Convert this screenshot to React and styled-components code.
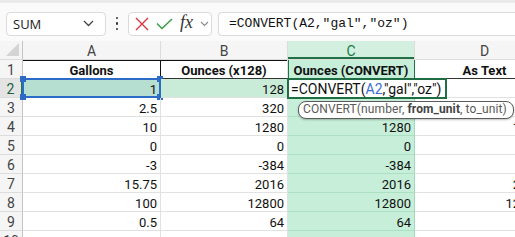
import styled, { createGlobalStyle, css } from "styled-components";

const GlobalStyle = createGlobalStyle`
  body {
    margin: 0;
    background: #ffffff;
    overflow: hidden;
    font-family: Roboto, "Liberation Sans", sans-serif;
  }
`;

// C3 sits under the function tooltip, so it is left blank here
const rows = [
  ["2.5", "320", "", "320"],
  ["10", "1280", "1280", "1280"],
  ["0", "0", "0", "0"],
  ["-3", "-384", "-384", "-384"],
  ["15.75", "2016", "2016", "2016"],
  ["100", "12800", "12800", "12800"],
  ["0.5", "64", "64", "64"],
  ["", "", "", ""],
];

export default function App() {
  return (
    <>
      <GlobalStyle />
      <Toolbar>
        <NameBox>
          <span>SUM</span>
          <svg width="11" height="7" viewBox="0 0 11 7">
            <path d="M1 1 L5.5 5.5 L10 1" fill="none" stroke="#444" strokeWidth="1.3" />
          </svg>
        </NameBox>
        <Dots>
          <i />
          <i />
          <i />
        </Dots>
        <IconBox>
          <svg width="14" height="14" viewBox="0 0 14 14">
            <path d="M1 1 L13 13 M13 1 L1 13" stroke="#d8383c" strokeWidth="1.4" />
          </svg>
          <svg width="17" height="12" viewBox="0 0 17 12">
            <path d="M1 5.5 L6 10.5 L16 1" fill="none" stroke="#3a9b47" strokeWidth="1.5" />
          </svg>
          <Fx>fx</Fx>
          <svg width="9" height="6" viewBox="0 0 9 6">
            <path d="M1 1 L4.5 4.5 L8 1" fill="none" stroke="#8a8a8a" strokeWidth="1.1" />
          </svg>
        </IconBox>
        <FormulaBar>=CONVERT(A2,"gal","oz")</FormulaBar>
      </Toolbar>

      <Sheet>
        <Corner>
          <svg width="13" height="13" viewBox="0 0 13 13">
            <path d="M13 0 L13 13 L0 13 Z" fill="#d4d4d4" />
          </svg>
        </Corner>
        <ColHead>A</ColHead>
        <ColHead>B</ColHead>
        <ColHead $active>C</ColHead>
        <ColHead>D</ColHead>

        <RowHead>1</RowHead>
        <Cell $title $ruled $rightRule>Gallons</Cell>
        <Cell $title $ruled>Ounces (x128)</Cell>
        <Cell $title $green $outlined>Ounces (CONVERT)</Cell>
        <Cell $title>As Text</Cell>

        <RowHead $active>2</RowHead>
        <Cell $ref>
          1
          <RefFrame>
            <Handle $x="left" $y="top" />
            <Handle $x="right" $y="top" />
            <Handle $x="left" $y="bottom" />
            <Handle $x="right" $y="bottom" />
          </RefFrame>
        </Cell>
        <Cell $mint>128</Cell>
        <Cell $editing>
          <EditBox>
            =CONVERT(<RefText>A2</RefText>,"gal","oz")
          </EditBox>
          <Tip>
            CONVERT(number, <b>from_unit</b>, to_unit)
          </Tip>
        </Cell>
        <Cell $textCol>128</Cell>

        {rows.map((r, i) => (
          <Row key={i} n={i + 3} values={r} />
        ))}
      </Sheet>
    </>
  );
}

function Row({ n, values }) {
  return (
    <>
      <RowHead>{n}</RowHead>
      <Cell>{values[0]}</Cell>
      <Cell>{values[1]}</Cell>
      <Cell $green>{values[2]}</Cell>
      <Cell $textCol>{values[3]}</Cell>
    </>
  );
}

const Toolbar = styled.div`
  height: 41px;
  box-sizing: border-box;
  border-top: 3px solid #ebebeb;
  background: #fafafa;
  display: flex;
  align-items: center;
  padding: 3px 0 0 6px;
`;

const boxBase = css`
  box-sizing: border-box;
  height: 24px;
  background: #ffffff;
  border: 1px solid #dadada;
  border-radius: 4px;
  display: flex;
  align-items: center;
`;

const NameBox = styled.div`
  ${boxBase};
  width: 100px;
  padding: 0 11px 0 6px;
  justify-content: space-between;
  font-family: "Open Sans", sans-serif;
  font-size: 13px;
  color: #222;
`;

const Dots = styled.div`
  width: 22px;
  display: flex;
  flex-direction: column;
  align-items: center;
  gap: 3px;
  i {
    width: 2.5px;
    height: 2.5px;
    border-radius: 50%;
    background: #333;
  }
`;

const IconBox = styled.div`
  ${boxBase};
  width: 84px;
  padding: 0 2px 0 6px;
  justify-content: space-between;
`;

const Fx = styled.span`
  font-family: "Liberation Serif", serif;
  font-style: italic;
  font-size: 18px;
  color: #333;
  margin-top: -3px;
`;

const FormulaBar = styled.div`
  ${boxBase};
  flex: 1;
  margin-left: 6px;
  border-right: none;
  border-radius: 4px 0 0 4px;
  padding-left: 10px;
  font-family: "Liberation Mono", monospace;
  font-size: 13px;
  color: #111;
`;

const Sheet = styled.div`
  display: grid;
  grid-template-columns: 23px 138px 127px 127px 140px;
  grid-auto-rows: 19px;
  font-family: Roboto, "Liberation Sans", sans-serif;
  font-size: 13px;
`;

const headBase = css`
  box-sizing: border-box;
  background: #f5f5f5;
  color: #444;
  border-right: 1px solid #dcdcdc;
  border-bottom: 1px solid #dcdcdc;
  display: flex;
  align-items: center;
  justify-content: center;
  padding-top: 1px;
  font-size: 14px;
`;

const Corner = styled.div`
  ${headBase};
  align-items: flex-end;
  justify-content: flex-end;
  padding: 0 3px 3px 0;
  border-right-color: #c4c4c4;
`;

const ColHead = styled.div`
  ${headBase};
  ${(p) =>
    p.$active &&
    css`
      background: #d3efdf;
      color: #157a45;
      box-shadow: inset 0 -2px 0 #217346;
    `}
`;

const RowHead = styled.div`
  ${headBase};
  border-right-color: #c4c4c4;
  ${(p) =>
    p.$active &&
    css`
      background: #e4e4e4;
      color: #1f5e3c;
      border-right: 2px solid #217346;
    `}
`;

const Cell = styled.div`
  position: relative;
  box-sizing: border-box;
  border-right: 1px solid #e1e1e1;
  border-bottom: 1px solid #e1e1e1;
  padding: 0 3px;
  line-height: 21px;
  text-align: right;
  white-space: nowrap;
  color: #111;
  ${(p) =>
    p.$title &&
    css`
      font-weight: 700;
      text-align: center;
      border-bottom-color: #333;
    `}
  ${(p) => p.$ruled && css`box-shadow: inset 0 1px 0 #111;`}
  ${(p) => p.$rightRule && css`border-right-color: #111;`}
  ${(p) =>
    p.$green &&
    css`
      background: #c6eed8;
      border-right-color: #a3d8bb;
      border-bottom-color: #ace0c3;
    `}
  ${(p) =>
    p.$outlined &&
    css`
      border-right-color: #217346;
      border-bottom-color: #217346;
      box-shadow: inset 1px 0 0 #217346;
    `}
  ${(p) => p.$mint && css`background: #c8ecd8;`}
  ${(p) => p.$ref && css`background: #b6ded1;`}
  ${(p) => p.$editing && css`z-index: 2;`}
  ${(p) => p.$textCol && css`padding-right: 12px;`}
`;

const RefFrame = styled.div`
  position: absolute;
  inset: -1px -1px -1px -1px;
  border: 2px solid #2e6bc6;
  pointer-events: none;
`;

const Handle = styled.span`
  position: absolute;
  width: 6px;
  height: 6px;
  background: #2e6bc6;
  ${(p) => (p.$x === "left" ? "left: -4px;" : "right: -4px;")}
  ${(p) => (p.$y === "top" ? "top: -4px;" : "bottom: -4px;")}
`;

const EditBox = styled.div`
  position: absolute;
  left: -1px;
  top: -1px;
  width: 160px;
  height: 21px;
  box-sizing: border-box;
  background: #ffffff;
  border: 2px solid #1f6e43;
  padding-left: 2px;
  line-height: 18px;
  font-size: 14px;
  text-align: left;
  color: #111;
`;

const RefText = styled.span`
  color: #3b6ed0;
`;

const Tip = styled.div`
  position: absolute;
  left: 10px;
  top: 22px;
  width: 216px;
  height: 18px;
  box-sizing: border-box;
  background: #ffffff;
  border: 1.5px solid #5c5c5c;
  border-radius: 8px;
  box-shadow: 0 1px 2px rgba(0, 0, 0, 0.25);
  padding: 0 4px;
  line-height: 15px;
  font-size: 12px;
  letter-spacing: 0.1px;
  color: #5a5a5a;
  text-align: left;
  white-space: nowrap;
  b {
    color: #444;
    font-weight: 700;
  }
`;
